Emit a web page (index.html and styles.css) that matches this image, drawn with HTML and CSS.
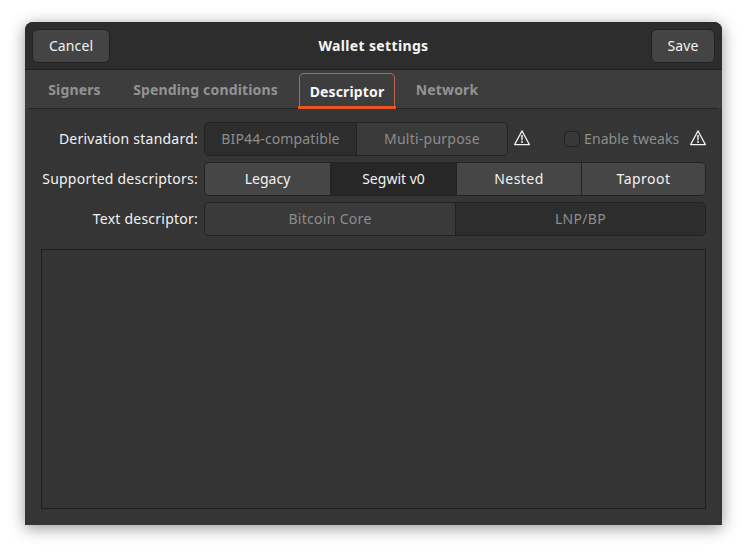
FILE: index.html
```html
<!DOCTYPE html>
<html lang="en">
<head>
<meta charset="utf-8">
<title>Wallet settings</title>
<link rel="stylesheet" href="styles.css">
</head>
<body>
<svg class="defs" width="0" height="0" aria-hidden="true">
  <symbol id="warn" viewBox="0 0 16 16">
    <path d="M8 .9 15.4 14.6H.6Z" fill="none" stroke="#f2f2f2" stroke-width="1.2" stroke-linejoin="round"/>
    <path d="M7.2 5h1.6l-.2 5.4H7.4Z" fill="#f2f2f2"/>
    <rect x="7.2" y="11.2" width="1.6" height="1.7" fill="#f2f2f2"/>
  </symbol>
</svg>
<main class="window">
  <header class="titlebar">
    <div class="side"><button class="btn cancel">Cancel</button></div>
    <h1 class="title">Wallet settings</h1>
    <div class="side side-end"><button class="btn save">Save</button></div>
  </header>
  <nav class="tabs">
    <span class="tab tab-signers">Signers</span>
    <span class="tab tab-spending">Spending conditions</span>
    <span class="tab active">Descriptor</span>
    <span class="tab tab-network">Network</span>
  </nav>
  <section class="content">
    <div class="form">
      <label class="label">Derivation standard:</label>
      <div class="row-controls">
        <div class="seg seg-derivation">
          <span class="seg-item dim dark w-bip sp-1">BIP44-compatible</span>
          <span class="seg-item dim mid grow sp-2">Multi-purpose</span>
        </div>
        <svg class="warn warn-a"><use href="#warn"/></svg>
        <span class="check"></span>
        <span class="check-label">Enable tweaks</span>
        <svg class="warn warn-b"><use href="#warn"/></svg>
      </div>
      <label class="label">Supported descriptors:</label>
      <div class="seg">
        <span class="seg-item light w-126">Legacy</span>
        <span class="seg-item pressed w-126">Segwit v0</span>
        <span class="seg-item light w-125 sp-4">Nested</span>
        <span class="seg-item light grow sp-4">Taproot</span>
      </div>
      <label class="label">Text descriptor:</label>
      <div class="seg">
        <span class="seg-item dim mid w-251 sp-3">Bitcoin Core</span>
        <span class="seg-item dim dark grow sp-3">LNP/BP</span>
      </div>
    </div>
    <div class="textbox"></div>
  </section>
</main>
</body>
</html>
```

FILE: styles.css
```css
* { box-sizing: border-box; }
html, body { height: 100%; }
body {
  margin: 0;
  padding: 22px 25px 28px;
  background: #fff;
  font-family: "Noto Sans", "Open Sans", sans-serif;
  font-size: 14px;
  color: #f2f2f2;
  overflow: hidden;
}
.defs { position: absolute; }
.window {
  width: 697px;
  height: 503px;
  display: flex;
  flex-direction: column;
  background: #353535;
  border-radius: 8px 8px 0 0;
  box-shadow: 0 3px 16px rgba(0, 0, 0, .42);
}
.titlebar {
  height: 48px;
  flex: none;
  display: grid;
  grid-template-columns: 1fr auto 1fr;
  align-items: center;
  padding: 7px 7px 6px;
  background: #2d2d2d;
  border-bottom: 1px solid #1f1f1f;
  border-radius: 8px 8px 0 0;
}
.side { display: flex; }
.side-end { justify-content: flex-end; }
.title {
  margin: 0 0 2px;
  font-size: 14px;
  font-weight: 700;
  letter-spacing: .35px;
  color: #f6f6f6;
}
.btn {
  height: 34px;
  padding: 0 0 1px;
  background: #444;
  border: 1px solid #222;
  border-radius: 6px;
  color: #f2f2f2;
  font: inherit;
  letter-spacing: .1px;
}
.cancel { width: 78px; }
.save { width: 64px; }
.tabs {
  height: 39px;
  flex: none;
  display: flex;
  align-items: stretch;
  margin: 0 3px;
  padding-left: 20px;
  background: #3d3d3d;
  border-bottom: 1px solid #262626;
  box-shadow: -3px 0 0 #3d3d3d, 3px 0 0 #3d3d3d;
}
.tab {
  display: flex;
  align-items: center;
  justify-content: center;
  font-weight: 700;
  color: #939393;
  letter-spacing: .15px;
}
.tab-signers { width: 53px; }
.tab-spending { width: 145px; margin-left: 32px; }
.tab-network { width: 62px; margin-left: 21px; }
.active {
  position: relative;
  width: 96px;
  height: 35px;
  margin: 3px 0 0 21px;
  color: #f6f6f6;
  border: 1px solid #b8674a;
  border-bottom: 0;
  border-radius: 5px 5px 0 0;
}
.active::after {
  content: "";
  position: absolute;
  left: -2px;
  right: -2px;
  bottom: -1px;
  height: 3px;
  background: #e95420;
}
.content {
  flex: 1;
  display: flex;
  flex-direction: column;
  padding: 13px 16px 16px;
  min-height: 0;
}
.form {
  display: grid;
  grid-template-columns: 157px 502px;
  grid-auto-rows: 34px;
  column-gap: 6px;
  row-gap: 6px;
  align-items: stretch;
}
.label {
  display: flex;
  align-items: center;
  justify-content: flex-end;
  padding-bottom: 2px;
  letter-spacing: .23px;
  color: #f2f2f2;
}
.row-controls {
  display: flex;
  align-items: center;
}
.seg {
  display: flex;
  height: 34px;
  border: 1px solid #222;
  border-radius: 5px;
  overflow: hidden;
  background: #222;
}
.seg-derivation { width: 304px; flex: none; }
.seg-item {
  display: flex;
  align-items: center;
  justify-content: center;
  padding-bottom: 2px;
  border-right: 1px solid #222;
}
.seg-item:last-child { border-right: 0; }
.w-bip { width: 152px; }
.w-126 { width: 126px; }
.w-125 { width: 125px; }
.w-251 { width: 251px; }
.grow { flex: 1; }
.sp-1 { letter-spacing: .12px; }
.sp-2 { letter-spacing: .23px; }
.sp-3 { letter-spacing: .3px; }
.sp-4 { letter-spacing: .45px; }
.light { background: #464646; color: #f2f2f2; }
.pressed { background: #272727; color: #f2f2f2; }
.dim { color: #8d8d8d; }
.dark { background: #2d2d2d; }
.mid { background: #3a3a3a; }
.warn { width: 16px; height: 16px; flex: none; margin-bottom: 2px; }
.warn-a { margin-left: 6px; }
.check {
  width: 16px;
  height: 16px;
  flex: none;
  margin-left: 34px;
  background: #383838;
  border: 1px solid #222;
  border-radius: 4px;
}
.check-label {
  width: 96px;
  flex: none;
  margin-left: 4px;
  padding-bottom: 2px;
  letter-spacing: .1px;
  color: #8d8d8d;
  white-space: nowrap;
}
.warn-b { margin-left: 10px; }
.textbox {
  flex: 1;
  margin-top: 13px;
  background: #343434;
  border: 1px solid #1f1f1f;
}
```
